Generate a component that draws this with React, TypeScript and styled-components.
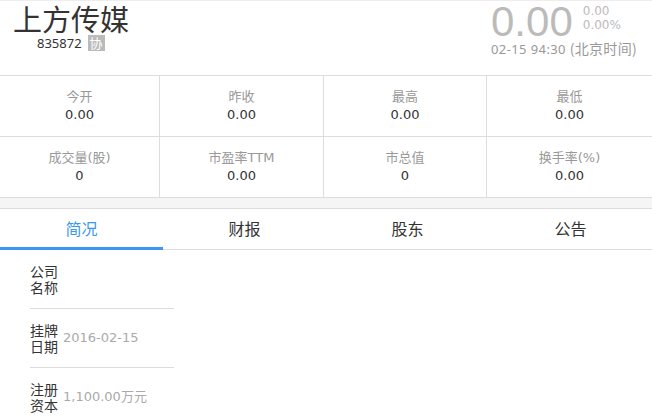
import React from 'react';
import styled, { createGlobalStyle } from 'styled-components';

const GlobalStyle = createGlobalStyle`
  html, body {
    margin: 0;
    padding: 0;
    background: #fff;
  }
  body {
    font-family: "Noto Sans", "Noto Sans CJK SC", sans-serif;
    color: #333;
  }
`;

const stats = [
  { label: '今开', value: '0.00' },
  { label: '昨收', value: '0.00' },
  { label: '最高', value: '0.00' },
  { label: '最低', value: '0.00' },
  { label: '成交量(股)', value: '0' },
  { label: '市盈率TTM', value: '0.00' },
  { label: '市总值', value: '0' },
  { label: '换手率(%)', value: '0.00' },
];

const tabs = ['简况', '财报', '股东', '公告'];

const info = [
  { label: '公司名称', value: '' },
  { label: '挂牌日期', value: '2016-02-15' },
  { label: '注册资本', value: '1,100.00万元' },
];

export default function App() {
  return (
    <Page>
      <GlobalStyle />
      <Header>
        <NameBlock>
          <StockName>上方传媒</StockName>
          <CodeRow>
            835872<Badge>协</Badge>
          </CodeRow>
        </NameBlock>
        <PriceBlock>
          <PriceRow>
            <Price>0.00</Price>
            <Change>
              <span>0.00</span>
              <span>0.00%</span>
            </Change>
          </PriceRow>
          <Time>
            02-15 94:30 <Zone>(北京时间)</Zone>
          </Time>
        </PriceBlock>
      </Header>
      <StatGrid>
        {stats.map((s) => (
          <StatCell key={s.label}>
            <StatLabel>{s.label}</StatLabel>
            <StatValue>{s.value}</StatValue>
          </StatCell>
        ))}
      </StatGrid>
      <Spacer />
      <Tabs>
        {tabs.map((t, i) => (
          <Tab key={t} active={i === 0}>
            {t}
          </Tab>
        ))}
      </Tabs>
      <InfoList>
        {info.map((row) => (
          <InfoRow key={row.label}>
            <InfoLabel>{row.label}</InfoLabel>
            <InfoValue>{row.value}</InfoValue>
          </InfoRow>
        ))}
      </InfoList>
    </Page>
  );
}

const Page = styled.div`
  width: 652px;
  height: 420px;
  overflow: hidden;
  border-top: 1px solid #eee;
  box-sizing: border-box;
`;

const Header = styled.div`
  display: flex;
  justify-content: space-between;
  height: 74px;
  border-bottom: 1px solid #ddd;
`;

const NameBlock = styled.div`
  display: flex;
  flex-direction: column;
  padding-left: 13px;
`;

const StockName = styled.div`
  margin-top: 2px;
  font-family: "Noto Sans CJK SC", sans-serif;
  font-size: 29px;
  line-height: 30px;
  color: #333;
`;

const CodeRow = styled.div`
  display: flex;
  align-items: center;
  margin-top: 1px;
  padding-left: 24px;
  font-size: 13px;
  line-height: 18px;
  color: #333;
`;

const Badge = styled.span`
  display: inline-flex;
  align-items: center;
  justify-content: center;
  width: 17px;
  height: 16px;
  margin-left: 6px;
  background: #bbb;
  color: #fff;
  font-family: "Noto Sans CJK SC", sans-serif;
  font-size: 13px;
  line-height: 16px;
`;

const PriceBlock = styled.div`
  display: flex;
  flex-direction: column;
  padding-right: 15px;
`;

const PriceRow = styled.div`
  display: flex;
  align-items: flex-start;
`;

const Price = styled.div`
  font-family: "Liberation Sans", sans-serif;
  font-size: 42px;
  line-height: 42px;
  color: #bbb;
`;

const Change = styled.div`
  display: flex;
  flex-direction: column;
  margin-left: 10px;
  margin-top: 3px;
  font-family: "DejaVu Sans", sans-serif;
  font-size: 12px;
  line-height: 14px;
  color: #bbb;
`;

const Time = styled.div`
  margin-top: -3px;
  font-size: 13px;
  line-height: 16px;
  color: #999;
  white-space: nowrap;
  letter-spacing: 0.4px;
`;

const Zone = styled.span`
  font-family: "Noto Sans CJK SC", sans-serif;
  font-size: 14px;
  letter-spacing: 0.3px;
`;

const StatGrid = styled.div`
  display: grid;
  grid-template-columns: 160px 164px 163px 165px;
  border-bottom: 1px solid #ddd;
`;

const StatCell = styled.div`
  height: 60px;
  display: flex;
  flex-direction: column;
  align-items: center;
  justify-content: center;
  border-right: 1px solid #ddd;
  font-family: "DejaVu Sans", "Noto Sans CJK SC", sans-serif;
  font-size: 13px;
  line-height: 18px;
  &:nth-child(-n + 4) {
    border-bottom: 1px solid #ddd;
  }
  &:nth-child(4n) {
    border-right: none;
  }
`;

const StatLabel = styled.div`
  color: #999;
`;

const StatValue = styled.div`
  color: #333;
`;

const Spacer = styled.div`
  height: 10px;
  background: #f5f5f5;
  border-bottom: 1px solid #ddd;
`;

const Tabs = styled.div`
  display: grid;
  grid-template-columns: repeat(4, 1fr);
  border-bottom: 1px solid #ddd;
`;

const Tab = styled.div<{ active?: boolean }>`
  height: 38px;
  display: flex;
  align-items: center;
  justify-content: center;
  font-family: "Noto Sans CJK SC", sans-serif;
  font-size: 16px;
  color: ${(p) => (p.active ? '#3a98f0' : '#333')};
  border-bottom: 3px solid ${(p) => (p.active ? '#3a98f0' : 'transparent')};
  margin-bottom: -1px;
`;

const InfoList = styled.div`
  display: flex;
  flex-direction: column;
  width: 144px;
  margin-left: 30px;
`;

const InfoRow = styled.div`
  display: flex;
  align-items: center;
  padding: 13px 0;
  border-bottom: 1px solid #ddd;
  &:last-child {
    border-bottom: none;
  }
`;

const InfoLabel = styled.div`
  flex-shrink: 0;
  width: 28px;
  font-family: "Noto Sans CJK SC", sans-serif;
  font-size: 14px;
  line-height: 16px;
  color: #333;
`;

const InfoValue = styled.div`
  margin-left: 5px;
  font-family: "DejaVu Sans", "Noto Sans CJK SC", sans-serif;
  font-size: 13px;
  line-height: 16px;
  color: #aaa;
`;
